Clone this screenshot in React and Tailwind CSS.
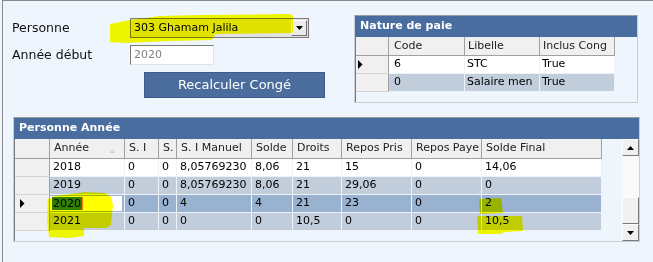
import React from "react";

const natureCols = [
  { w: "w-[76px]", pl: "pl-[5px]", label: "Code" },
  { w: "w-[75px]", pl: "pl-[3px]", label: "Libelle" },
  { w: "w-[75px]", pl: "pl-[3px]", label: "Inclus Cong" },
];

const natureRows = [
  { cells: ["6", "STC", "True"], bg: "bg-white", current: true },
  { cells: ["0", "Salaire men", "True"], bg: "bg-[#c1cddb]" },
];

const anneeCols = [
  { w: "w-[75px]", label: "Année", sort: true },
  { w: "w-[34px]", label: "S. I" },
  { w: "w-[18px]", label: "S." },
  { w: "w-[75px]", label: "S. I Manuel" },
  { w: "w-[41px]", label: "Solde" },
  { w: "w-[49px]", label: "Droits" },
  { w: "w-[70px]", label: "Repos Pris" },
  { w: "w-[70px]", label: "Repos Paye" },
  { w: "w-[120px]", label: "Solde Final" },
];

const anneeRows = [
  { cells: ["2018", "0", "0", "8,05769230", "8,06", "21", "15", "0", "14,06"], bg: "bg-white" },
  { cells: ["2019", "0", "0", "8,05769230", "8,06", "21", "29,06", "0", "0"], bg: "bg-[#c1cddb]" },
  { cells: ["2020", "0", "0", "4", "4", "21", "23", "0", "2"], bg: "bg-[#98b2cf]", current: true },
  { cells: ["2021", "0", "0", "0", "0", "10,5", "0", "0", "10,5"], bg: "bg-[#c1cddb]" },
];

function RowArrow() {
  return (
    <svg width="5" height="9" viewBox="0 0 5 9">
      <path d="M0 0 L4.5 4.5 L0 9 Z" fill="#000" />
    </svg>
  );
}

function PanelBar({ title }) {
  return (
    <div className="h-[21px] bg-[#4a6d9f] flex items-center pl-[5px] text-white font-bold text-[11px]">
      {title}
    </div>
  );
}

function NaturePaie() {
  return (
    <div className="w-[284px] h-[88px] border border-[#c9ced4] border-t-[#9a9a9a] flex flex-col">
      <PanelBar title="Nature de paie" />
      <div className="flex-1 border-l border-[#7c7c7c] text-[11px] text-black">
        <div className="flex h-[19px]">
          <div className="w-[33px] bg-[#f0f0f0] border-r border-b border-[#a0a0a0]" />
          {natureCols.map((c) => (
            <div
              key={c.label}
              className={`${c.w} ${c.pl} bg-[#f0f0f0] border-r border-b border-[#a0a0a0] flex items-center whitespace-nowrap overflow-hidden text-[#222]`}
            >
              {c.label}
            </div>
          ))}
        </div>
        {natureRows.map((r, i) => (
          <div key={i} className="flex h-[18px]">
            <div className="w-[33px] bg-[#f0f0f0] border-r border-b border-r-[#a0a0a0] border-b-[#d4d4d4] flex items-center pl-[2px]">
              {r.current && <RowArrow />}
            </div>
            {r.cells.map((v, j) => (
              <div
                key={j}
                className={`${natureCols[j].w} ${j === 0 ? "pl-[5px]" : "pl-[2px]"} ${r.bg} border-r border-b border-[#eef3f9] flex items-center whitespace-nowrap overflow-hidden`}
              >
                {v}
              </div>
            ))}
          </div>
        ))}
      </div>
    </div>
  );
}

function ScrollBtn({ up }) {
  return (
    <div className="h-[17px] bg-[#f0f0f0] border border-t-white border-l-white border-r-[#7a7a7a] border-b-[#7a7a7a] flex items-center justify-center">
      <svg width="7" height="4" viewBox="0 0 7 4">
        <path d={up ? "M0 4 L3.5 0 L7 4 Z" : "M0 0 L3.5 4 L7 0 Z"} fill="#000" />
      </svg>
    </div>
  );
}

function PersonneAnnee() {
  return (
    <div className="ml-[10px] mt-[14px] w-[627px] h-[125px] border border-[#c9ced4] border-t-[#9a9a9a] flex flex-col">
      <PanelBar title="Personne Année" />
      <div className="flex-1 flex border-l border-[#7c7c7c] text-[11px] text-black">
        <div className="w-[587px]">
          <div className="flex h-[20px]">
            <div className="w-[35px] bg-[#f0f0f0] border-r border-b border-[#a0a0a0]" />
            {anneeCols.map((c) => (
              <div
                key={c.label}
                className={`${c.w} relative pl-[4px] bg-[#f0f0f0] border-r border-b border-[#a0a0a0] flex items-center whitespace-nowrap overflow-hidden text-[#222]`}
              >
                {c.label}
                {c.sort && (
                  <svg className="absolute right-[9px] top-[10px]" width="5" height="4" viewBox="0 0 5 4">
                    <path d="M0.5 3.5 L2.5 0.5 L4.5 3.5 Z" fill="none" stroke="#cfcfcf" strokeWidth="1" />
                  </svg>
                )}
              </div>
            ))}
          </div>
          {anneeRows.map((r, i) => (
            <div key={i} className="flex h-[18px]">
              <div className="w-[35px] bg-[#f0f0f0] border-r border-b border-r-[#a0a0a0] border-b-[#d4d4d4] flex items-center pl-[5px]">
                {r.current && <RowArrow />}
              </div>
              {r.cells.map((v, j) =>
                r.current && j === 0 ? (
                  <div
                    key={j}
                    className={`${anneeCols[j].w} ${r.bg} border-r border-b border-[#eef3f9] flex items-center pr-[2px] py-[1px]`}
                  >
                    <div className="h-full w-full bg-white flex items-center pl-[2px]">
                      <span className="bg-[#2f7fd6] text-black leading-[13px] px-[1px]">{v}</span>
                      <span className="w-px h-[13px] bg-[#ff7a00]" />
                    </div>
                  </div>
                ) : (
                  <div
                    key={j}
                    className={`${anneeCols[j].w} pl-[3px] ${r.bg} border-r border-b border-[#eef3f9] flex items-center whitespace-nowrap overflow-hidden`}
                  >
                    {v}
                  </div>
                )
              )}
            </div>
          ))}
        </div>
        <div className="w-[20px]" />
        <div className="w-[17px] flex flex-col">
          <ScrollBtn up />
          <div className="h-[41px] bg-[repeating-conic-gradient(#f4f4f4_0%_25%,#ffffff_0%_50%)] bg-[length:2px_2px]" />
          <div className="h-[27px] bg-[#f0f0f0] border border-t-white border-l-white border-r-[#7a7a7a] border-b-[#7a7a7a]" />
          <ScrollBtn />
        </div>
      </div>
    </div>
  );
}

function Highlights() {
  return (
    <svg
      className="absolute inset-0 pointer-events-none mix-blend-multiply"
      width="653"
      height="262"
      viewBox="0 0 653 262"
    >
      <g fill="#ffff00">
        <path d="M110 24 L130 20 L160 16 L200 15 L290 14 L293 16 L293 33 L215 34 L212 40 L170 41 L125 43 L110 42 Z" />
        <path d="M48 199 L55 196 L85 192 L105 193 L111 197 L113 205 L112 215 L111 225 L106 228 L84 228 L84 236 L70 238 L49 237 L47 220 Z" />
        <path d="M479 199 L501 198 L503 213 L480 214 Z" />
        <path d="M477 216 L522 216 L523 231 L505 232 L500 234 L478 234 Z" />
      </g>
    </svg>
  );
}

export default function App() {
  return (
    <div className="relative w-[653px] h-[262px] bg-[#eef5fd] pl-[2px] overflow-hidden font-['DejaVu_Sans',Verdana,sans-serif]">
      <div className="h-full border-l border-t border-[#8a8a8a]">
        <div className="flex items-start pt-[14px]">
          <div className="w-[351px] pt-[3px]">
            <div className="flex items-center h-[20px]">
              <label className="w-[127px] pl-[9px] text-[12.5px] text-[#111]">Personne</label>
              <div className="relative w-[179px] h-[20px] bg-[#e2e2e2] border border-[#7a7a7a] flex items-center pl-[3px] text-[11px] text-black">
                303 Ghamam Jalila
                <div className="absolute right-px top-px w-[16px] h-[16px] bg-[#ececec] border border-t-white border-l-white border-r-[#6f6f6f] border-b-[#6f6f6f] flex items-center justify-center">
                  <svg width="7" height="4" viewBox="0 0 7 4">
                    <path d="M0 0 L3.5 4 L7 0 Z" fill="#000" />
                  </svg>
                </div>
              </div>
            </div>
            <div className="flex items-center h-[20px] mt-[7px]">
              <label className="w-[127px] pl-[9px] text-[12.5px] text-[#111]">Année début</label>
              <div className="w-[84px] h-[20px] bg-white border border-t-[#7a7a7a] border-l-[#7a7a7a] border-b-[#e3e3e3] border-r-[#e3e3e3] flex items-center pl-[3px] text-[11px] text-[#808080]">
                2020
              </div>
            </div>
            <button className="ml-[141px] mt-[7px] w-[181px] h-[26px] bg-[#4b6d9e] border border-[#3d5c88] text-white text-[13px] flex items-center justify-center">
              Recalculer Congé
            </button>
          </div>
          <NaturePaie />
        </div>
        <PersonneAnnee />
      </div>
      <Highlights />
    </div>
  );
}
